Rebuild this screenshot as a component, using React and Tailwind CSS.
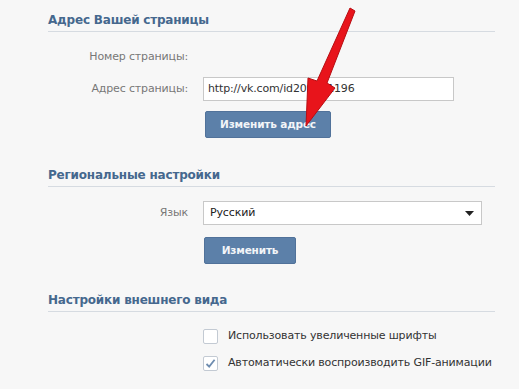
import React from "react";

const font = { fontFamily: "'DejaVu Sans', 'Noto Sans', sans-serif" };

function Heading({ children, top }) {
  return (
    <div
      className={`${top} pb-[4px] border-b border-[#d6dbe1] text-[12px] leading-[13px] font-bold text-[#45688e] tracking-[-0.2px]`}
    >
      {children}
    </div>
  );
}

function Checkbox({ checked }) {
  return (
    <div className="shrink-0 w-[15px] h-[15px] bg-white border border-[#c3cad3] rounded-[2px] flex items-center justify-center">
      {checked && (
        <svg width="11" height="11" viewBox="0 0 11 11">
          <path d="M1.5 6 L4.2 8.6 L9.6 1.8" fill="none" stroke="#6f8db0" strokeWidth="1.8" />
        </svg>
      )}
    </div>
  );
}

export default function App() {
  return (
    <div className="relative w-[519px] h-[389px] bg-[#f7f7f7] overflow-hidden whitespace-nowrap" style={font}>
      <div className="pl-[48px] w-[495px] text-[11px] text-[#222] tracking-[-0.15px]">
        {/* Адрес страницы */}
        <Heading top="pt-[14px]">Адрес Вашей страницы</Heading>
        <div className="mt-[13px] flex items-center h-[24px] gap-[15px]">
          <div className="w-[140px] text-right text-[#777]">Номер страницы:</div>
        </div>
        <div className="mt-[8px] flex items-center h-[24px] gap-[15px]">
          <div className="w-[140px] text-right text-[#777]">Адрес страницы:</div>
          <div className="w-[251px] h-[24px] bg-white border border-[#c8c8c8] flex items-center px-[4px] text-[#333]">
            http://vk.com/id209541196
          </div>
        </div>
        <div className="mt-[10px] ml-[157px]">
          <button className="w-[126px] h-[27px] bg-[#5c80a9] border border-[#51729a] rounded-[2px] text-[#f2f5f8] text-[10.5px] font-bold">
            Изменить адрес
          </button>
        </div>

        {/* Региональные настройки */}
        <Heading top="pt-[31px]">Региональные настройки</Heading>
        <div className="mt-[14px] flex items-center h-[24px] gap-[15px]">
          <div className="w-[140px] text-right text-[#777]">Язык</div>
          <div className="w-[279px] h-[24px] bg-white border border-[#c8c8c8] flex items-center justify-between pl-[6px] pr-[7px] text-[#222]">
            <span>Русский</span>
            <svg width="9" height="5" viewBox="0 0 9 5">
              <path d="M0 0 H9 L4.5 5 Z" fill="#222" />
            </svg>
          </div>
        </div>
        <div className="mt-[12px] ml-[156px]">
          <button className="w-[92px] h-[27px] bg-[#5c80a9] border border-[#51729a] rounded-[2px] text-[#f2f5f8] text-[10.5px] font-bold">
            Изменить
          </button>
        </div>

        {/* Внешний вид */}
        <Heading top="pt-[30px]">Настройки внешнего вида</Heading>
        <div className="mt-[17px] ml-[155px] flex flex-col gap-[12px]">
          <div className="flex items-center gap-[10px] h-[15px]">
            <Checkbox />
            <span className="text-[#333]">Использовать увеличенные шрифты</span>
          </div>
          <div className="flex items-center gap-[10px] h-[15px]">
            <Checkbox checked />
            <span className="text-[#333]">Автоматически воспроизводить GIF-анимации</span>
          </div>
        </div>
      </div>

      {/* red arrow */}
      <svg className="absolute left-0 top-0" width="519" height="389" viewBox="0 0 519 389">
        <path
          d="M350 8 L355 11 L327 83 L335 88 L306 126 L308 78 L317 81 Z"
          fill="#e8141b"
          stroke="#b80d12"
          strokeWidth="1"
          strokeLinejoin="round"
        />
      </svg>
    </div>
  );
}
